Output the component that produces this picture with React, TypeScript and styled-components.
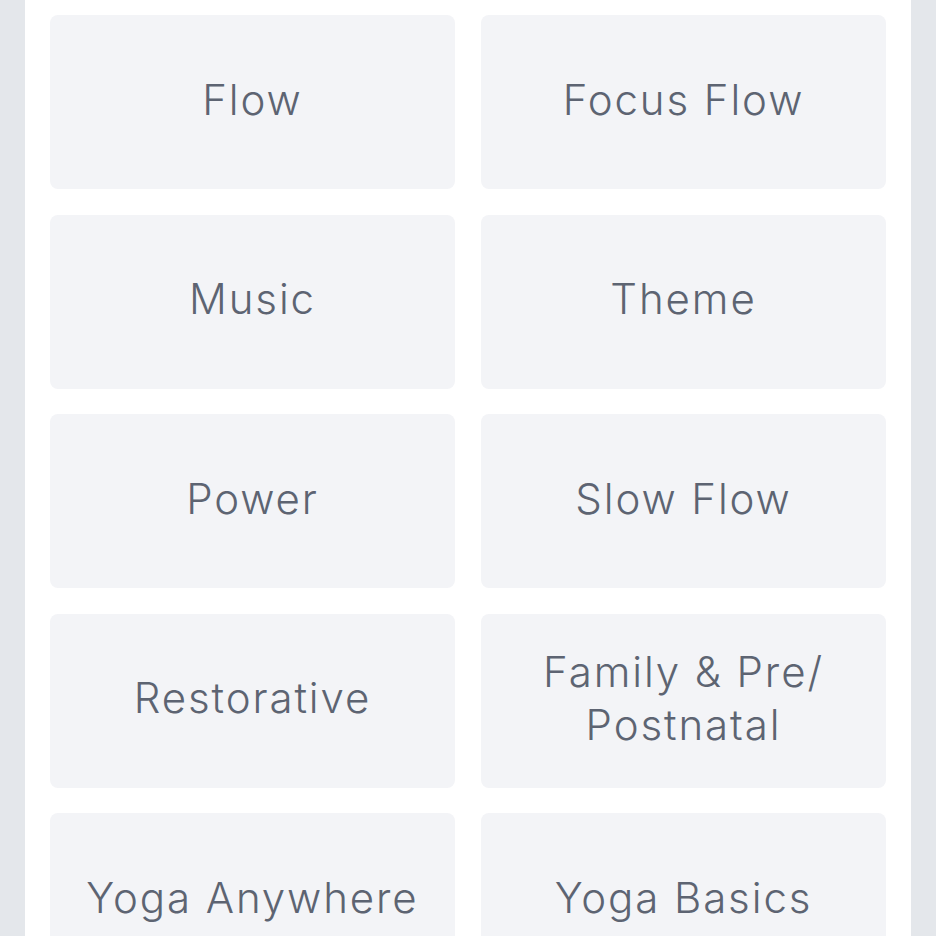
import React from "react"
import styled, { createGlobalStyle } from "styled-components"

const GlobalStyle = createGlobalStyle`
  html, body {
    margin: 0;
    padding: 0;
    background: #e4e7eb;
  }
`

const Page = styled.div`
  min-height: 936px;
  padding: 0 25px;
  background: #e4e7eb;
`

const Panel = styled.main`
  background: #ffffff;
  min-height: 936px;
  padding: 15px 25px 0;
  box-sizing: border-box;
`

const Grid = styled.div`
  display: grid;
  grid-template-columns: 1fr 1fr;
  grid-auto-rows: 174px;
  column-gap: 26px;
  row-gap: 25.5px;
`

const Tile = styled.button`
  display: flex;
  align-items: center;
  justify-content: center;
  border: none;
  border-radius: 8px;
  background: #f3f4f7;
  padding: 0 24px 6px;
  font-family: Inter, "Noto Sans", sans-serif;
  font-size: 42px;
  font-weight: 300;
  letter-spacing: 1.9px;
  line-height: 53px;
  color: #5d6472;
  text-align: center;
  cursor: pointer;
`

const categories = [
  "Flow",
  "Focus Flow",
  "Music",
  "Theme",
  "Power",
  "Slow Flow",
  "Restorative",
  "Family & Pre/ Postnatal",
  "Yoga Anywhere",
  "Yoga Basics",
]

export default function App() {
  return (
    <Page>
      <GlobalStyle />
      <Panel>
        <Grid>
          {categories.map(name => (
            <Tile key={name}>{name}</Tile>
          ))}
        </Grid>
      </Panel>
    </Page>
  )
}
